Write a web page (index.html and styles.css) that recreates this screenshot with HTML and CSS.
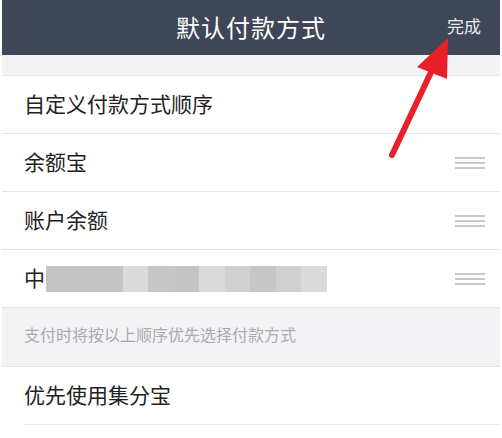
FILE: index.html
```html
<!DOCTYPE html>
<html lang="zh-CN">
<head>
  <meta charset="utf-8">
  <title>默认付款方式</title>
  <link rel="stylesheet" href="styles.css">
</head>
<body>
<div class="screen">
  <div class="navBar">
    <span class="navTitle">默认付款方式</span>
    <span class="navDone">完成</span>
  </div>

  <div class="gap"></div>

  <div class="group">
    <div class="row">自定义付款方式顺序</div>
    <div class="row">
      <span>余额宝</span>
      <span class="handle"><i></i><i></i><i></i></span>
    </div>
    <div class="row">
      <span>账户余额</span>
      <span class="handle"><i></i><i></i><i></i></span>
    </div>
    <div class="row">
      <span class="card">中<span class="blur">
        <b class="s1"></b><b class="s1"></b><b class="s1"></b><b class="s2"></b><b class="s3"></b><b class="s1"></b><b class="s2"></b><b class="s4"></b><b class="s3"></b><b class="s4"></b><b class="s2"></b>
      </span></span>
      <span class="handle"><i></i><i></i><i></i></span>
    </div>
  </div>

  <div class="note">支付时将按以上顺序优先选择付款方式</div>

  <div class="group">
    <div class="row inset">优先使用集分宝</div>
  </div>

  <svg class="arrow" width="502" height="438" viewBox="0 0 502 438">
    <line x1="392" y1="155" x2="432" y2="70" stroke="#e8202a" stroke-width="6" stroke-linecap="round"/>
    <polygon points="448,38 417,67 447,79" fill="#e8202a"/>
  </svg>
</div>
</body>
</html>
```

FILE: styles.css
```css
body {
  margin: 0;
  background: white;
  font-family: "Noto Sans CJK SC", "Noto Sans", sans-serif;
}

.screen {
  width: 502px;
  height: 438px;
  padding: 0 2px;
  box-sizing: border-box;
  overflow: hidden;
  position: relative;
}

.navBar {
  height: 55px;
  background: #3e4657;
  color: white;
  display: flex;
  align-items: center;
  justify-content: center;
  position: relative;
}

.navTitle {
  font-size: 24px;
  letter-spacing: 1px;
  margin-top: -2px;
}

.navDone {
  position: absolute;
  right: 19px;
  top: 13px;
  font-size: 17px;
  color: #e8eaee;
}

.gap {
  height: 20px;
  background: #f3f3f6;
  border-bottom: 1px solid #e6e6e8;
}

.group {
  background: white;
}

.row {
  height: 58px;
  box-sizing: border-box;
  padding: 0 15px 3px 22px;
  border-bottom: 1px solid #e6e6e8;
  display: flex;
  align-items: center;
  justify-content: space-between;
  font-size: 21px;
  color: #222;
}

.row.inset {
  padding-left: 0;
  margin-left: 22px;
  border-bottom-color: #ececee;
}

.handle {
  display: flex;
  flex-direction: column;
  gap: 3px;
  width: 30px;
  margin-top: 4px;
}

.handle i {
  display: block;
  height: 2px;
  background: #c8c8c8;
}

.card {
  display: flex;
  align-items: center;
}

.blur {
  display: flex;
  height: 26px;
  margin-left: 1px;
  margin-top: 4px;
}

.blur b {
  display: block;
  width: 25.5px;
  height: 26px;
}

.blur .s1 { background: #c4c4c4; }
.blur .s2 { background: #dadada; }
.blur .s3 { background: #c6c6c6; }
.blur .s4 { background: #d0d0d0; }

.note {
  height: 59px;
  background: #f3f3f6;
  border-bottom: 1px solid #e6e6e8;
  box-sizing: border-box;
  padding: 14px 0 0 22px;
  font-size: 16px;
  color: #aaaaae;
}

.arrow {
  position: absolute;
  left: 0;
  top: 0;
  pointer-events: none;
}
```
